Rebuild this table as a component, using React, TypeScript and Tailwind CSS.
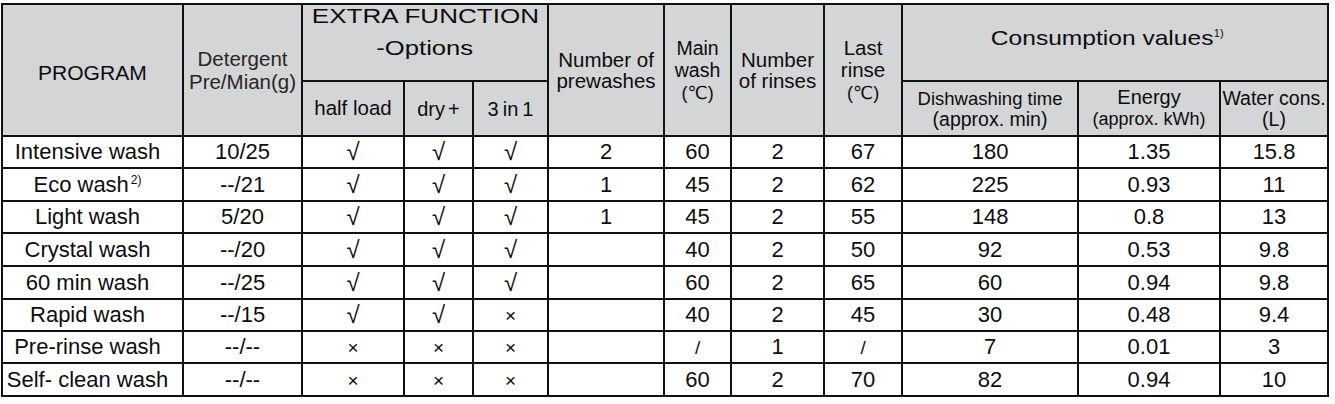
import React from 'react';

const rows: string[][] = [
  ['Intensive wash', '10/25', '√', '√', '√', '2', '60', '2', '67', '180', '1.35', '15.8'],
  ['Eco wash', '--/21', '√', '√', '√', '1', '45', '2', '62', '225', '0.93', '11'],
  ['Light wash', '5/20', '√', '√', '√', '1', '45', '2', '55', '148', '0.8', '13'],
  ['Crystal wash', '--/20', '√', '√', '√', '', '40', '2', '50', '92', '0.53', '9.8'],
  ['60 min wash', '--/25', '√', '√', '√', '', '60', '2', '65', '60', '0.94', '9.8'],
  ['Rapid wash', '--/15', '√', '√', '×', '', '40', '2', '45', '30', '0.48', '9.4'],
  ['Pre-rinse wash', '--/--', '×', '×', '×', '', '/', '1', '/', '7', '0.01', '3'],
  ['Self- clean wash', '--/--', '×', '×', '×', '', '60', '2', '70', '82', '0.94', '10']
];

const rowHeights = ['h-[32px]', 'h-[33px]', 'h-[32px]', 'h-[33px]', 'h-[33px]', 'h-[32px]', 'h-[32px]', 'h-[33px]'];

const th = 'border-2 border-[#111] bg-[#d4d5d7] font-normal text-center align-middle p-0';
const td = 'border-2 border-[#111] bg-white text-center align-middle p-0 text-[22px] leading-none';

const Cell = ({ v }: { v: string }) => {
  if (v === '×') return <span className="text-[19px]">×</span>;
  if (v === '√') return <span className="text-[24px]">√</span>;
  if (v === '/') return <span className="text-[19px]">/</span>;
  return <>{v}</>;
};

const App = () => {
  return <div className="w-[1335px] h-[404px] bg-white pt-[3px] pl-[1px] text-[#0d0d0d] font-['Liberation_Sans','DejaVu_Sans',sans-serif]">
      <table className="table-fixed border-collapse w-[1328px]">
        <colgroup>
          <col className="w-[181px]" />
          <col className="w-[119px]" />
          <col className="w-[102px]" />
          <col className="w-[69px]" />
          <col className="w-[75px]" />
          <col className="w-[116px]" />
          <col className="w-[67px]" />
          <col className="w-[93px]" />
          <col className="w-[78px]" />
          <col className="w-[176px]" />
          <col className="w-[142px]" />
          <col className="w-[108px]" />
        </colgroup>
        <thead>
          <tr className="h-[77px]">
            <th rowSpan={2} className={th + ' text-[19.5px] pt-[8px]'}>
              <span className="inline-block scale-x-[1.08]">PROGRAM</span>
            </th>
            <th rowSpan={2} className={th + ' text-[20.5px] leading-[23px] text-[#2a2522]'}>
              Detergent<br />Pre/Mian(g)
            </th>
            <th colSpan={3} className={th + ' align-top text-[20.5px]'}>
              <div className="leading-[20px] mt-[1px]">
                <span className="inline-block scale-x-[1.27]">EXTRA FUNCTION</span>
              </div>
              <div className="leading-[20px] mt-[12px]">
                <span className="inline-block scale-x-[1.25]">-Options</span>
              </div>
            </th>
            <th rowSpan={2} className={th + ' text-[20.5px] leading-[21px]'}>
              Number of<br />prewashes
            </th>
            <th rowSpan={2} className={th + ' text-[19.5px] leading-[22px]'}>
              Main<br />wash<br /><span className="text-[18px]">(℃)</span>
            </th>
            <th rowSpan={2} className={th + ' text-[20.5px] leading-[21px]'}>
              Number<br />of rinses
            </th>
            <th rowSpan={2} className={th + ' text-[20.5px] leading-[22px]'}>
              Last<br />rinse<br /><span className="text-[18px]">(℃)</span>
            </th>
            <th colSpan={3} className={th + ' text-[21px] pb-[10px]'}>
              <span className="inline-block scale-x-[1.17]">Consumption values</span>
              <sup className="text-[11px] ml-[17px] -top-[8px]">1)</sup>
            </th>
          </tr>
          <tr className="h-[55px]">
            <th className={th + ' text-[20.5px]'}>half load</th>
            <th className={th + ' text-[20px]'}>dry<span className="ml-[3px]">+</span></th>
            <th className={th + ' text-[20px]'}>3{'\u2009'}in{'\u2009'}1</th>
            <th className={th + ' text-[18.5px] leading-[21px]'}>
              Dishwashing time<br /><span className="text-[19.5px]">(approx. min)</span>
            </th>
            <th className={th + ' text-[20px] leading-[21px]'}>
              Energy<br /><span className="text-[18px]">(approx. kWh)</span>
            </th>
            <th className={th + ' text-[19.5px] leading-[21px]'}>
              Water cons.<br />(L)
            </th>
          </tr>
        </thead>
        <tbody>
          {rows.map((r, i) => <tr key={r[0]} className={rowHeights[i]}>
              <td className={td + ' pr-[10px]'}>
                {r[0]}
                {i === 1 && <sup className="text-[12px] ml-[2px] -top-[8px]">2)</sup>}
              </td>
              {r.slice(1).map((v, j) => <td key={j} className={td}>
                  <Cell v={v} />
                </td>)}
            </tr>)}
        </tbody>
      </table>
    </div>;
};

export default App;
